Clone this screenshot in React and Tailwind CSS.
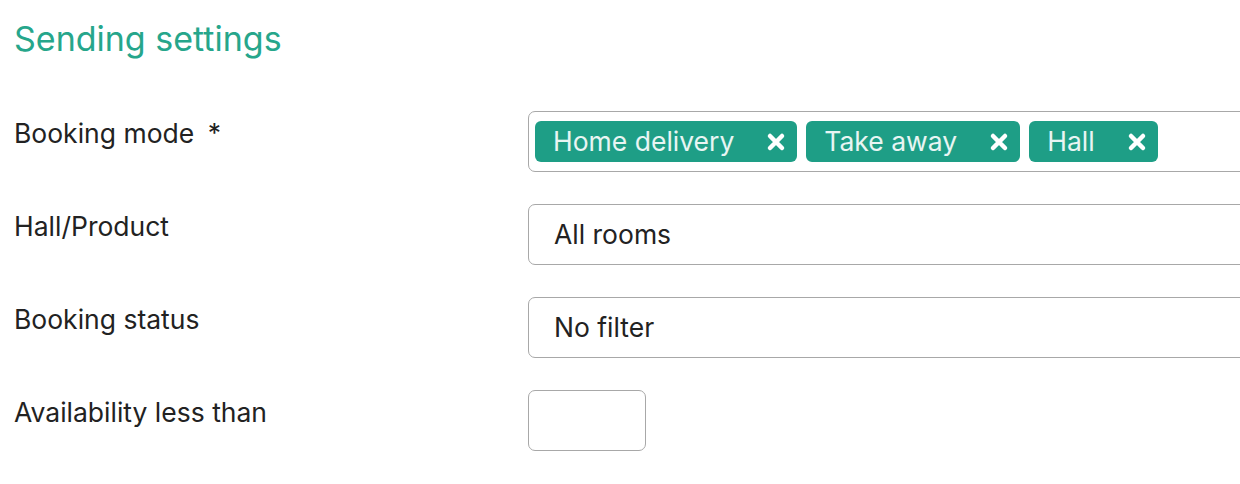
import React from 'react';

const tags = ['Home delivery', 'Take away', 'Hall'];

const CloseIcon = () => (
  <svg width="20" height="20" viewBox="0 0 20 20" className="shrink-0">
    <path d="M4 4 L16 16 M16 4 L4 16" stroke="white" strokeWidth="4.5" strokeLinecap="round" />
  </svg>
);

const Row = ({ label, children }) => (
  <div className="flex h-[93px]">
    <div className="w-[528px] shrink-0 pl-[14px] pt-[2px] text-[26.5px] leading-[40px] text-[#222]">{label}</div>
    <div className="flex-1">{children}</div>
  </div>
);

export default function App() {
  return (
    <div className="w-[1240px] h-[484px] overflow-hidden bg-white" style={{ fontFamily: 'Inter, "Noto Sans", sans-serif' }}>
      <h2 className="pl-[14px] pt-[18px] text-[34px] leading-[42px] font-normal text-[#26a68b]">Sending settings</h2>
      <div className="mt-[51px]">
        <Row label={<span>Booking mode <span className="ml-[6px]">*</span></span>}>
          <div className="w-[760px] h-[61px] border-[1.5px] border-[#a8a8a8] rounded-[7px] flex items-center gap-[9px] pl-[6px]">
            {tags.map(t => (
              <span key={t} className="h-[41px] bg-[#1e9e86] rounded-[6px] flex items-center pl-[18px] pr-[11px] text-[26.5px] text-white/90">
                <span className="mr-[32px]">{t}</span>
                <CloseIcon />
              </span>
            ))}
          </div>
        </Row>
        <Row label="Hall/Product">
          <div className="w-[760px] h-[61px] border-[1.5px] border-[#a8a8a8] rounded-[7px] flex items-center pl-[25px] text-[26.5px] text-[#222]">All rooms</div>
        </Row>
        <Row label="Booking status">
          <div className="w-[760px] h-[61px] border-[1.5px] border-[#a8a8a8] rounded-[7px] flex items-center pl-[25px] text-[26.5px] text-[#222]">No filter</div>
        </Row>
        <Row label="Availability less than">
          <div className="w-[118px] h-[61px] border-[1.5px] border-[#a8a8a8] rounded-[7px]" />
        </Row>
      </div>
    </div>
  );
}
